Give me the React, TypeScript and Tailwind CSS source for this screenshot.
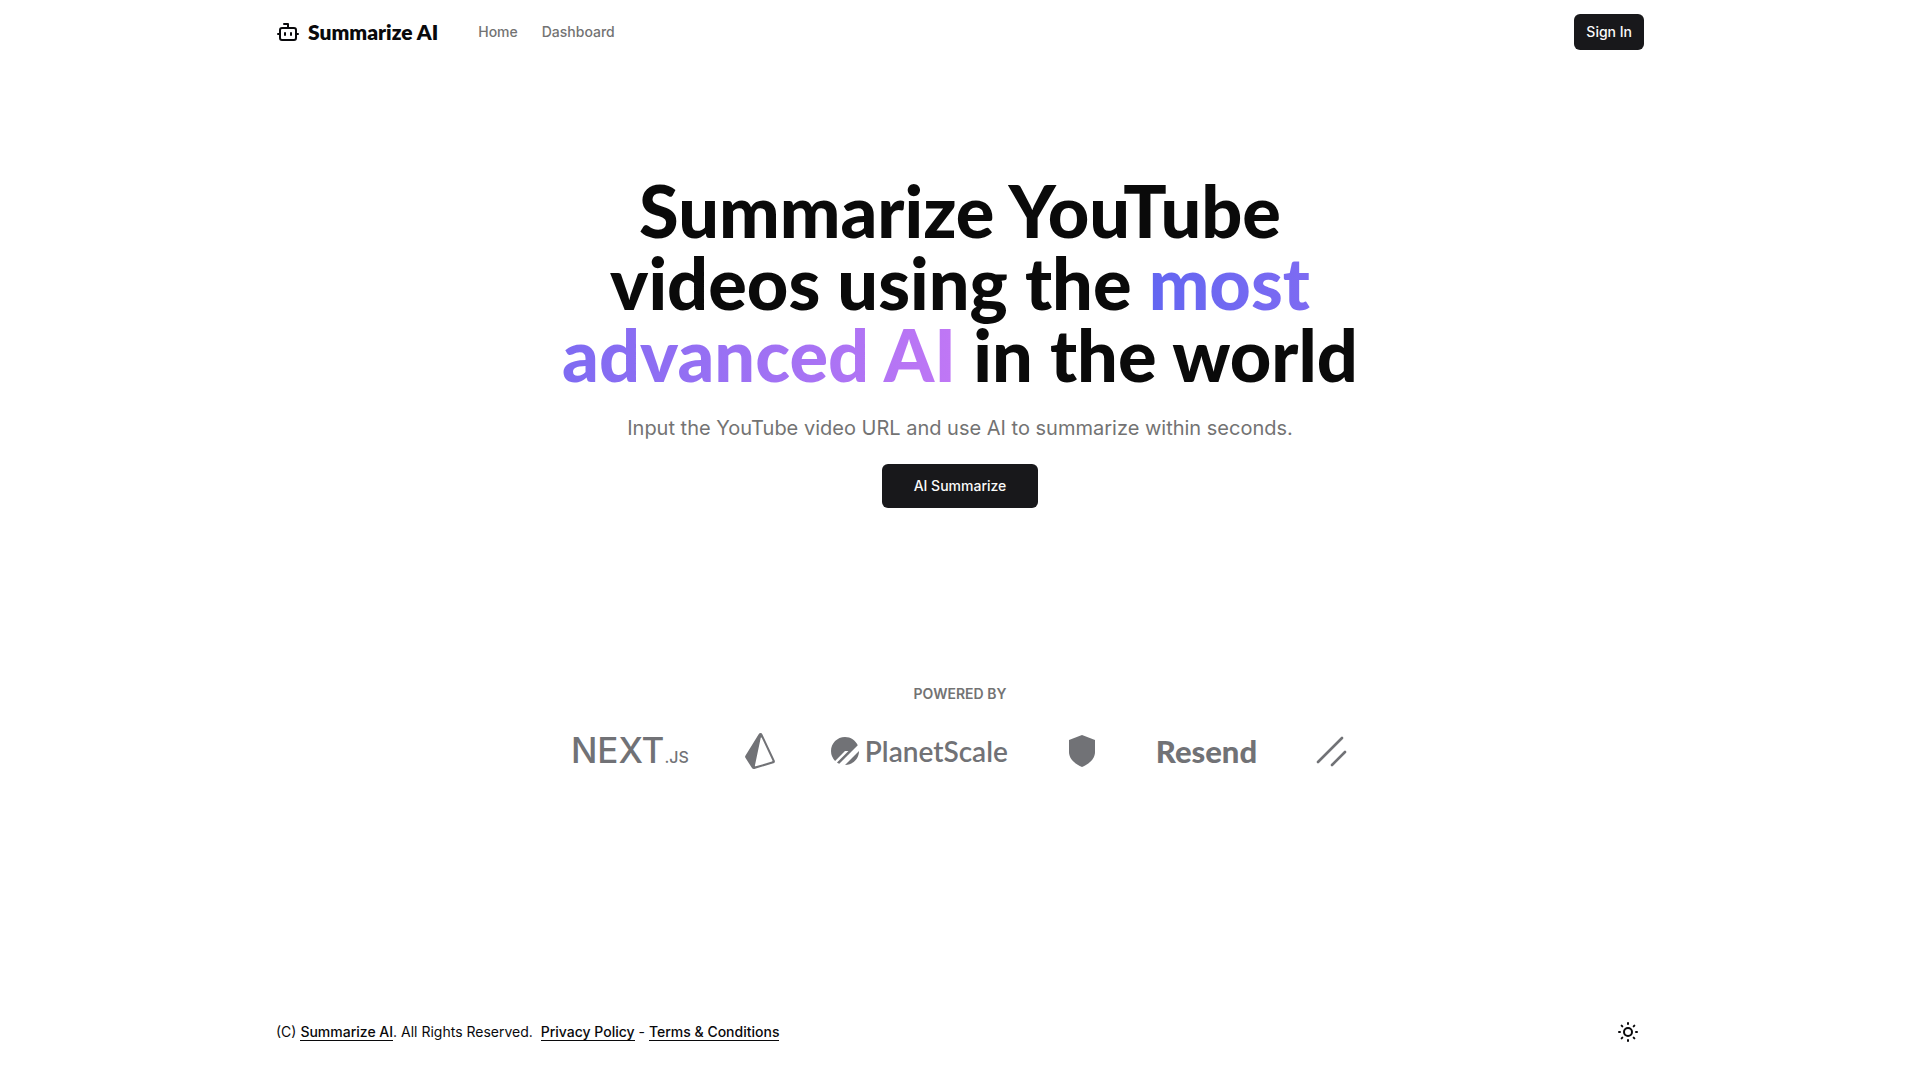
import { BotIcon, SunMedium } from "lucide-react";

const Prisma = () => (
  <svg viewBox="2 0 20 24" className="h-9 w-[30px]" fill="currentColor" role="img" aria-label="Prisma">
    <path d="M21.8068 18.2848L13.5528.7565c-.207-.4382-.639-.7273-1.1286-.7541-.5023-.0293-.9523.213-1.2062.6253L2.266 15.1271c-.2773.4518-.2718 1.0091.0158 1.4555l4.3759 6.7786c.2608.4046.7127.6388 1.1823.6388.1332 0 .267-.0188.3987-.0577l12.7019-3.7568c.3891-.1151.7072-.3904.8737-.7553s.1633-.7828-.0075-1.1454zm-1.8481.7519L9.1814 22.2242c-.3292.0975-.6448-.1873-.5756-.5194l3.8501-18.4386c.072-.3448.5486-.3996.699-.0803l7.1288 15.1382c.1344.2856-.019.6224-.325.7128z" />
  </svg>
);

const PlanetMark = () => (
  <svg viewBox="0 0 24 24" className="size-7" fill="currentColor" aria-hidden="true">
    <path d="M0 12C0 5.373 5.373 0 12 0c4.873 0 9.067 2.904 10.947 7.077l-15.87 15.87a11.981 11.981 0 0 1-1.935-1.099L14.99 12H12l-8.485 8.485A11.962 11.962 0 0 1 0 12Zm12.004 12L24 12.004C23.998 18.628 18.628 23.998 12.004 24Z" />
  </svg>
);

const Shield = () => (
  <svg viewBox="0 0 36 36" className="size-9" fill="currentColor" role="img" aria-label="Shield">
    <path d="M18 2 31 7v12c0 7-6 12-13 15C11 31 5 26 5 19V7L18 2Z" />
  </svg>
);

const Slashes = () => (
  <svg
    viewBox="0 0 36 36"
    className="size-9"
    fill="none"
    stroke="currentColor"
    strokeWidth="2.6"
    strokeLinecap="round"
    role="img"
    aria-label="shadcn/ui"
  >
    <path d="M29 5 5 29M32 19 19 32" />
  </svg>
);

export default function App() {
  return (
    <div className="flex min-h-screen flex-col bg-white font-['Inter',sans-serif] text-sm text-zinc-950">
      <header className="mx-auto flex h-16 w-full max-w-[1400px] items-center justify-between px-4">
        <div className="flex items-center gap-10">
          <a href="#" className="flex items-center gap-2 font-['Lato',sans-serif] text-[21px] font-extrabold">
            <BotIcon className="size-6" />
            Summarize AI
          </a>
          <nav className="flex gap-6 font-medium text-[#737373]">
            <a href="#home">Home</a>
            <a href="#dashboard">Dashboard</a>
          </nav>
        </div>
        <button type="button" className="h-9 rounded-md bg-zinc-900 px-3 font-medium text-zinc-50">
          Sign In
        </button>
      </header>

      <main className="flex flex-1 flex-col items-center px-4 pt-[110px] text-center">
        <h1 className="font-['Lato',sans-serif] text-7xl leading-[72px] font-black text-[#0a0a0a]">
          Summarize YouTube
          <br />
          videos using the{" "}
          <span className="bg-linear-to-r/srgb from-[#6366f1] to-[#c077f5] bg-clip-text text-transparent">
            most
            <br />
            advanced AI
          </span>{" "}
          in the world
        </h1>
        <p className="mt-[22px] text-xl leading-8 text-[#737373]">
          Input the YouTube video URL and use AI to summarize within seconds.
        </p>
        <button type="button" className="mt-5 h-11 rounded-md bg-zinc-900 px-8 font-medium text-zinc-50">
          AI Summarize
        </button>

        <section className="mt-44 text-[#737373]">
          <h2 className="leading-5 font-semibold">POWERED BY</h2>
          <div className="mt-7 flex flex-wrap items-center justify-center gap-14 text-[#717276]">
            <div className="flex items-baseline text-[35px] leading-9 font-medium">
              NEXT<span className="text-base">.JS</span>
            </div>
            <Prisma />
            <div className="flex items-center gap-1.5 font-['Lato',sans-serif] text-[28px] leading-9 font-semibold">
              <PlanetMark />
              PlanetScale
            </div>
            <Shield />
            <div className="font-['Lato',sans-serif] text-[31px] leading-9 font-black">Resend</div>
            <Slashes />
          </div>
        </section>
      </main>

      <footer className="mx-auto flex h-24 w-full max-w-[1400px] items-center justify-between px-4">
        <p>
          (C){" "}
          <a href="#" className="border-b border-zinc-950 font-medium">
            Summarize AI
          </a>
          . All Rights Reserved. &nbsp;
          <a href="#privacy" className="border-b border-zinc-950 font-medium">
            Privacy Policy
          </a>{" "}
          -{" "}
          <a href="#terms" className="border-b border-zinc-950 font-medium">
            Terms &amp; Conditions
          </a>
        </p>
        <button type="button" aria-label="Toggle theme" className="flex size-8 items-center justify-center rounded-md">
          <SunMedium className="size-6" />
        </button>
      </footer>
    </div>
  );
}
